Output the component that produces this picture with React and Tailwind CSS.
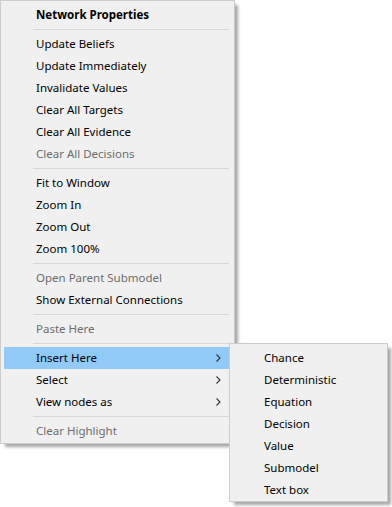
import React from "react";

const Chevron = () => (
  <svg width="5" height="8" viewBox="0 0 5 8" className="absolute right-[8px] top-[7px]">
    <path d="M0.5 0.5 L4 4 L0.5 7.5" fill="none" stroke="#333" strokeWidth="1.1" />
  </svg>
);

const Sep = () => (
  <div className="h-[7px] flex items-center pl-[29px] pr-[0px]">
    <div className="h-px w-full bg-[#d7d7d7]" />
  </div>
);

const Item = ({ children, disabled, bold, highlight, sub }) => (
  <div
    className={`relative h-[22px] flex items-center pl-[32px] pr-[5px] ${
      highlight ? "bg-[#91c9f7]" : ""
    } ${disabled ? "text-[#6d6d6d]" : "text-black"} ${bold ? "font-bold" : ""}`}
  >
    <span className="leading-none">{children}</span>
    {sub && <Chevron />}
  </div>
);

export default function App() {
  return (
    <div className="relative w-[392px] h-[507px] bg-white text-[11.5px] font-['Noto_Sans','Liberation_Sans',sans-serif]">
      <div className="w-[235px] bg-[#f0f0f0] border border-[#cccccc] pt-[3px] pb-[1px] pl-[3px] pr-[5px] shadow-[4px_4px_3px_-1px_rgba(0,0,0,0.35)]">
        <Item bold>Network Properties</Item>
        <Sep />
        <Item>Update Beliefs</Item>
        <Item>Update Immediately</Item>
        <Item>Invalidate Values</Item>
        <Item>Clear All Targets</Item>
        <Item>Clear All Evidence</Item>
        <Item disabled>Clear All Decisions</Item>
        <Sep />
        <Item>Fit to Window</Item>
        <Item>Zoom In</Item>
        <Item>Zoom Out</Item>
        <Item>Zoom 100%</Item>
        <Sep />
        <Item disabled>Open Parent Submodel</Item>
        <Item>Show External Connections</Item>
        <Sep />
        <Item disabled>Paste Here</Item>
        <Sep />
        <Item highlight sub>Insert Here</Item>
        <Item sub>Select</Item>
        <Item sub>View nodes as</Item>
        <Sep />
        <Item disabled>Clear Highlight</Item>
      </div>

      <div className="absolute left-[229px] top-[343px] w-[159px] bg-[#f0f0f0] border border-[#cccccc] pt-[3px] pb-[0px] pl-[2px] pr-[3px] shadow-[4px_4px_3px_-1px_rgba(0,0,0,0.35)]">
        <Item>Chance</Item>
        <Item>Deterministic</Item>
        <Item>Equation</Item>
        <Item>Decision</Item>
        <Item>Value</Item>
        <Item>Submodel</Item>
        <Item>Text box</Item>
      </div>
    </div>
  );
}
